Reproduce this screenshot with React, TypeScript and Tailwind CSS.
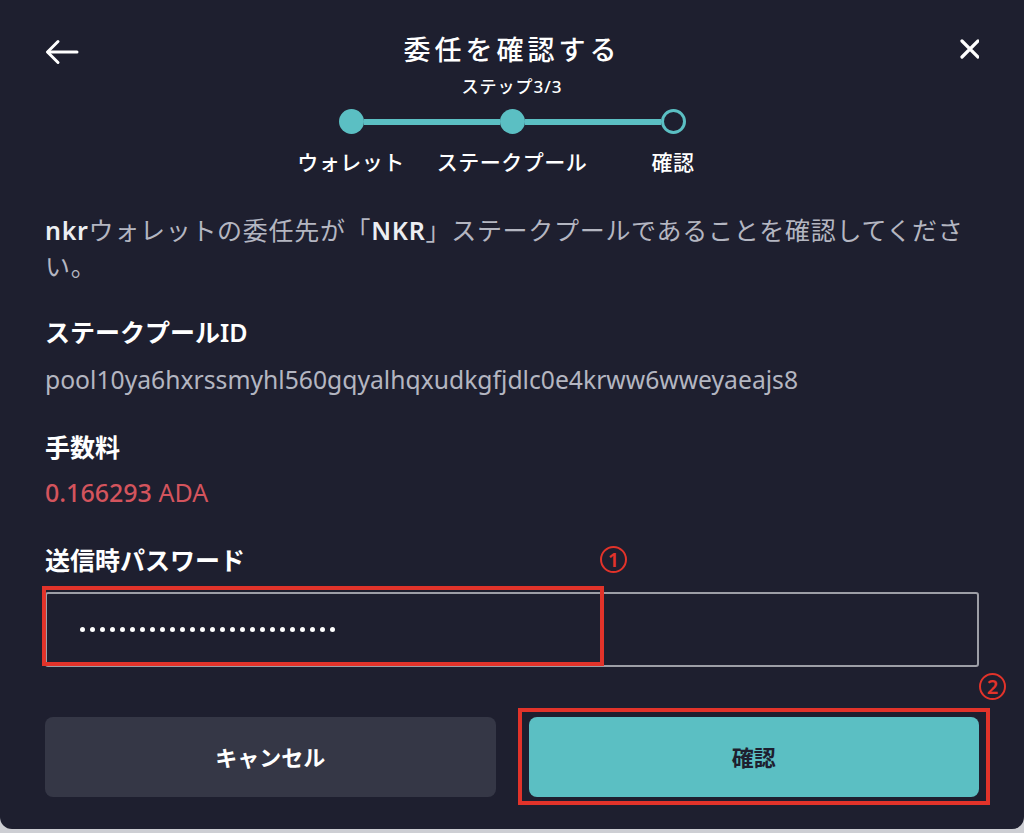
import React from 'react';

const font = "font-[family-name:'Noto_Sans','Noto_Sans_CJK_JP',sans-serif]";

const Annotation: React.FC<{ n: string }> = ({ n }) => (
  <span className="flex h-[27px] w-[27px] items-center justify-center rounded-full border-2 border-[#e2332a] text-[20px] font-semibold leading-none text-[#e2332a]">
    {n}
  </span>
);

const Stepper: React.FC = () => {
  const labels = ['ウォレット', 'ステークプール', '確認'];
  return (
    <div className="flex flex-col items-center">
      <div className="mt-[10px] flex w-[347px] items-center">
        <span className="h-[25px] w-[25px] shrink-0 rounded-full bg-[#5bbfc3]" />
        <span className="h-[6px] flex-1 bg-[#5bbfc3]" />
        <span className="h-[25px] w-[25px] shrink-0 rounded-full bg-[#5bbfc3]" />
        <span className="h-[6px] flex-1 bg-[#5bbfc3]" />
        <span className="h-[25px] w-[25px] shrink-0 rounded-full border-[3px] border-[#5bbfc3]" />
      </div>
      <div className="mt-[14px] flex w-[483px]">
        {labels.map((l) => (
          <span key={l} className="w-[161px] text-center text-[21px] font-medium leading-[28px] tracking-[0.5px] text-white">
            {l}
          </span>
        ))}
      </div>
    </div>
  );
};

export default function App() {
  return (
    <div className={`h-[833px] w-full bg-[#cdced3] ${font}`}>
      <div className="flex h-[829px] flex-col rounded-b-[12px] bg-[#1e1f2f] px-[45px] pt-[32px]">
        <div className="flex h-[36px] items-center justify-between">
          <svg width="34" height="26" viewBox="0 0 34 26" fill="none" stroke="white" strokeWidth="3" strokeLinecap="round" strokeLinejoin="round" className="mt-[4px]">
            <path d="M32 13H3" />
            <path d="M13 2.5 2.5 13 13 23.5" />
          </svg>
          <h1 className="text-[27px] font-medium leading-[36px] tracking-[4px] text-white">委任を確認する</h1>
          <svg width="34" height="20" viewBox="0 0 34 20" fill="none" stroke="white" strokeWidth="3.2" strokeLinecap="round" className="mb-[2px]">
            <path d="M17 2 33 18M33 2 17 18" />
          </svg>
        </div>

        <p className="mt-[7px] text-center text-[17px] font-medium leading-[24px] tracking-[1px] text-white">ステップ3/3</p>

        <Stepper />

        <p className="mt-[36px] text-[25px] leading-[36px] tracking-[0.7px] text-[#b4b6c1]">
          <span className="font-semibold text-[#eceef2]">nkr</span>ウォレットの委任先が「<span className="font-semibold text-[#eceef2]">NKR</span>」ステークプールであることを確認してくださ
          <br />
          い。
        </p>

        <h2 className="mt-[30px] text-[25px] font-semibold leading-[36px] text-white">ステークプールID</h2>
        <p className="mt-[12px] text-[24.7px] leading-[36px] text-[#b4b6c1]">pool10ya6hxrssmyhl560gqyalhqxudkgfjdlc0e4krww6wweyaeajs8</p>

        <h2 className="mt-[31px] text-[25px] font-semibold leading-[36px] text-white">手数料</h2>
        <p className="mt-[9px] text-[25px] leading-[36px] text-[#d4545d]">
          <span className="font-medium">0.166293</span> ADA
        </p>

        <div className="relative mt-[32px]">
          <h2 className="text-[25px] font-semibold leading-[36px] text-white">送信時パスワード</h2>
          <div className="absolute left-[555px] top-[4px]">
            <Annotation n="1" />
          </div>
        </div>

        <div className="relative mt-[14px]">
          <div className="flex h-[75px] items-center rounded-[3px] border-2 border-[#9d9ea6] px-[33px]">
            <div className="flex gap-[5px]">
              {Array.from({ length: 26 }).map((_, i) => (
                <span key={i} className="h-[5px] w-[5px] rounded-full bg-white" />
              ))}
            </div>
          </div>
          <div className="absolute left-[-3px] top-[-6px] h-[80px] w-[562px] border-4 border-[#e2332a]" />
        </div>

        <div className="relative mt-[50px] grid grid-cols-2 gap-[33px]">
          <button className="flex h-[80px] items-center justify-center rounded-[8px] bg-[#353746] text-[22px] font-bold text-white">
            キャンセル
          </button>
          <button className="flex h-[80px] items-center justify-center rounded-[8px] bg-[#5bbfc3] text-[22px] font-bold text-[#1e1f2f]">
            確認
          </button>
          <div className="absolute left-[473px] top-[-9px] h-[97px] w-[472px] border-4 border-[#e2332a]" />
          <div className="absolute left-[934px] top-[-44px]">
            <Annotation n="2" />
          </div>
        </div>
      </div>
    </div>
  );
}
